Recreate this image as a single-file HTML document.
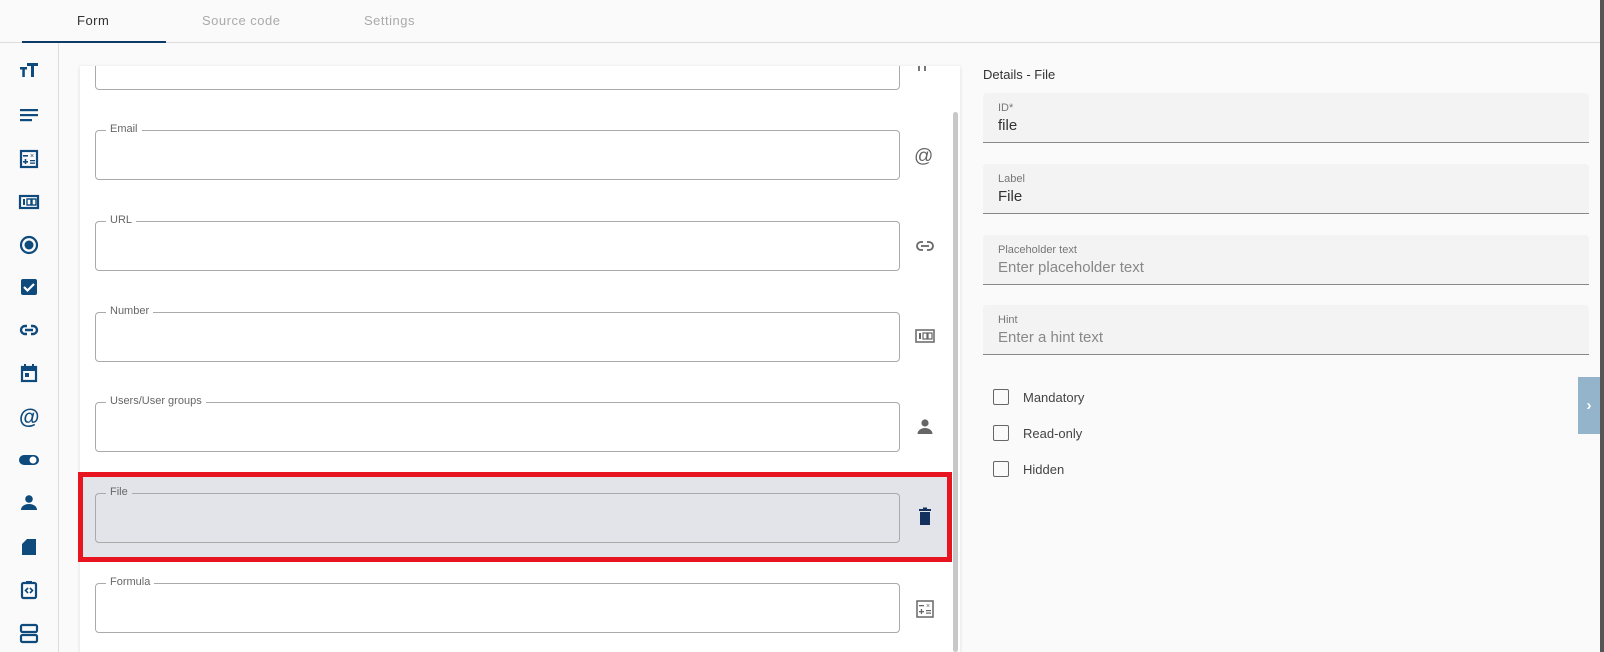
<!DOCTYPE html>
<html><head><meta charset="utf-8"><style>
*{box-sizing:border-box;margin:0;padding:0}
body{width:1604px;height:652px;overflow:hidden;background:#fafafa;font-family:"Liberation Sans",sans-serif;position:relative}
.abs{position:absolute}
.tab{position:absolute;top:13px;font-size:13px;letter-spacing:.5px}
.fld{position:absolute;left:95px;width:805px;height:50px;border:1px solid #aaa;border-radius:4px}
.fld span{position:absolute;top:-8px;left:10px;background:#fff;padding:0 4px;font-size:11px;color:#666}
.df{position:absolute;left:983px;width:606px;height:50px;background:#f3f3f3;border-bottom:1px solid #888;border-radius:4px 4px 0 0}
.df .l{position:absolute;left:15px;top:9px;font-size:11px;color:#777}
.df .v{position:absolute;left:15px;top:24px;font-size:15px;color:#333}
.df .p{color:#888}
.cb{position:absolute;left:993px;width:16px;height:16px;border:1.5px solid #666;border-radius:2px}
.cl{position:absolute;left:1023px;font-size:13px;color:#444}
</style></head><body>
<div class="abs" style="left:0;top:0;width:1604px;height:43px;border-bottom:1px solid #ddd;background:#fafafa"></div>
<div class="tab" style="left:77px;color:#333">Form</div>
<div class="tab" style="left:202px;color:#aaa">Source code</div>
<div class="tab" style="left:364px;color:#aaa">Settings</div>
<div class="abs" style="left:22px;top:41px;width:144px;height:2px;background:#0d3a66"></div>
<div class="abs" style="left:58px;top:43px;width:1px;height:609px;background:#ddd"></div>
<svg class="abs" style="left:0;top:0" width="58" height="652" fill="#0e4a7b">
<g transform="translate(19,61)"><rect x="1" y="6" width="7" height="2.5"/><rect x="3.3" y="6" width="2.5" height="10"/><rect x="8" y="2" width="11" height="3"/><rect x="12" y="2" width="3" height="14"/></g>
<g transform="translate(19,106)"><rect x="1" y="3" width="18" height="2.2"/><rect x="1" y="8" width="18" height="2.2"/><rect x="1" y="13" width="12" height="2.2"/></g>
<g transform="translate(19,149)"><rect x="2" y="2" width="16" height="16" fill="none" stroke="#0e4a7b" stroke-width="2.2"/><rect x="4" y="6" width="5" height="1.6"/><text x="11" y="9" font-size="7" fill="#0e4a7b">×</text><rect x="4" y="12" width="5" height="1.6"/><rect x="5.7" y="10" width="1.6" height="5"/><rect x="11" y="11" width="5" height="1.3"/><rect x="11" y="13.5" width="5" height="1.3"/></g>
<g transform="translate(19,192)"><rect x="1" y="4" width="18" height="12" fill="none" stroke="#0e4a7b" stroke-width="2.2"/><rect x="4" y="7" width="2" height="6"/><rect x="8" y="7" width="4" height="6" fill="none" stroke="#0e4a7b" stroke-width="1.4"/><rect x="13" y="7" width="4" height="6" fill="none" stroke="#0e4a7b" stroke-width="1.4"/></g>
<g transform="translate(19,235)"><circle cx="10" cy="10" r="8" fill="none" stroke="#0e4a7b" stroke-width="2.2"/><circle cx="10" cy="10" r="4.5"/></g>
<g transform="translate(19,277)"><rect x="2" y="2" width="16" height="16" rx="2"/><path d="M5 10l3.5 3.5L15 7" stroke="#fff" stroke-width="2.2" fill="none"/></g>
<g transform="translate(19,320)" fill="none" stroke="#0e4a7b" stroke-width="2.4"><path d="M8 6H6a4 4 0 000 8h2M12 6h2a4 4 0 010 8h-2M6 10h8"/></g>
<g transform="translate(19,363)"><rect x="3" y="4" width="14" height="14" fill="none" stroke="#0e4a7b" stroke-width="2.2"/><rect x="3" y="4" width="14" height="4"/><rect x="5" y="1" width="2" height="4"/><rect x="13" y="1" width="2" height="4"/><rect x="6" y="10" width="4" height="4"/></g>
<g transform="translate(19,407)"><text x="0" y="17" font-size="21" font-family="Liberation Sans" font-weight="bold" fill="#0e4a7b">@</text></g>
<g transform="translate(19,450)"><rect x="0" y="5" width="20" height="10" rx="5"/><circle cx="14" cy="10" r="3.5" fill="#fff"/></g>
<g transform="translate(19,493)"><circle cx="10" cy="6" r="3.8"/><path d="M2 17c0-4 4-6 8-6s8 2 8 6z"/></g>
<g transform="translate(19,537)"><path d="M8 2h9v16H3V7z"/></g>
<g transform="translate(19,580)"><rect x="3" y="3" width="14" height="15" rx="1.5" fill="none" stroke="#0e4a7b" stroke-width="2.2"/><rect x="7" y="1" width="6" height="3"/><path d="M9 8l-2.5 2.5L9 13M11 8l2.5 2.5L11 13" stroke="#0e4a7b" stroke-width="1.6" fill="none"/></g>
<g transform="translate(19,623)" fill="none" stroke="#0e4a7b" stroke-width="2.2"><rect x="2" y="2" width="16" height="7" rx="1.5"/><rect x="2" y="12" width="16" height="7" rx="1.5"/></g>
</svg>
<div class="abs" style="left:80px;top:66px;width:880px;height:586px;background:#fff;box-shadow:0 1px 4px rgba(0,0,0,.12)"></div>
<div class="abs" style="left:953px;top:112px;width:5px;height:540px;background:#c8c8c8;border-radius:3px"></div>
<div class="fld" style="top:66px;height:24px;border-top:none;border-radius:0 0 4px 4px"></div>
<div class="abs" style="left:918px;top:66px;width:2px;height:5px;background:#777"></div><div class="abs" style="left:924px;top:66px;width:2px;height:5px;background:#777"></div>
<div class="abs" style="left:78px;top:472px;width:874px;height:90px;background:#e2e4e9;border:5px solid #e8141f"></div>
<div class="fld" style="top:130px"><span>Email</span></div>
<div class="fld" style="top:221px"><span>URL</span></div>
<div class="fld" style="top:312px"><span>Number</span></div>
<div class="fld" style="top:402px"><span>Users/User groups</span></div>
<div class="fld" style="top:493px"><span style="background:#e2e4e9">File</span></div>
<div class="fld" style="top:583px"><span>Formula</span></div>
<svg class="abs" style="left:0;top:0" width="960" height="652" fill="#666">
<text x="914" y="162" font-size="19" fill="#666">@</text>
<g transform="translate(915,236)" fill="none" stroke="#666" stroke-width="1.8"><path d="M8 6H6a4 4 0 000 8h2M12 6h2a4 4 0 010 8h-2M6 10h8"/></g>
<g transform="translate(915,326)"><rect x="1" y="4" width="18" height="12" fill="none" stroke="#666" stroke-width="1.5"/><rect x="4" y="7" width="2" height="6"/><rect x="8" y="7" width="4" height="6" fill="none" stroke="#666" stroke-width="1.2"/><rect x="13" y="7" width="4" height="6" fill="none" stroke="#666" stroke-width="1.2"/></g>
<g transform="translate(915,417)"><circle cx="10" cy="6" r="3.6"/><path d="M2.5 17c0-4 4-6 7.5-6s7.5 2 7.5 6z"/></g>
<g transform="translate(915,507)" fill="#14305c"><rect x="4" y="2" width="12" height="2"/><rect x="8" y="0.5" width="4" height="2"/><path d="M5 5h10v13H5z"/></g>
<g transform="translate(915,599)"><rect x="2" y="2" width="16" height="16" fill="none" stroke="#666" stroke-width="1.5"/><rect x="4" y="6" width="5" height="1.3"/><text x="11" y="9" font-size="7">×</text><rect x="4" y="12" width="5" height="1.3"/><rect x="5.8" y="10" width="1.3" height="5"/><rect x="11" y="11" width="5" height="1.2"/><rect x="11" y="13.5" width="5" height="1.2"/></g>
</svg>
<div class="abs" style="left:983px;top:67px;font-size:13px;color:#333">Details - File</div>
<div class="df" style="top:93px"><div class="l">ID*</div><div class="v">file</div></div>
<div class="df" style="top:164px"><div class="l">Label</div><div class="v">File</div></div>
<div class="df" style="top:235px"><div class="l">Placeholder text</div><div class="v p">Enter placeholder text</div></div>
<div class="df" style="top:305px"><div class="l">Hint</div><div class="v p">Enter a hint text</div></div>
<div class="cb" style="top:389px"></div><div class="cl" style="top:390px">Mandatory</div>
<div class="cb" style="top:425px"></div><div class="cl" style="top:426px">Read-only</div>
<div class="cb" style="top:461px"></div><div class="cl" style="top:462px">Hidden</div>
<div class="abs" style="left:1578px;top:377px;width:22px;height:57px;background:#93b4cb;color:#fff;font-size:15px;font-weight:bold;text-align:center;line-height:57px">›</div>
<div class="abs" style="left:1600px;top:0;width:4px;height:652px;background:#555"></div>
</body></html>
